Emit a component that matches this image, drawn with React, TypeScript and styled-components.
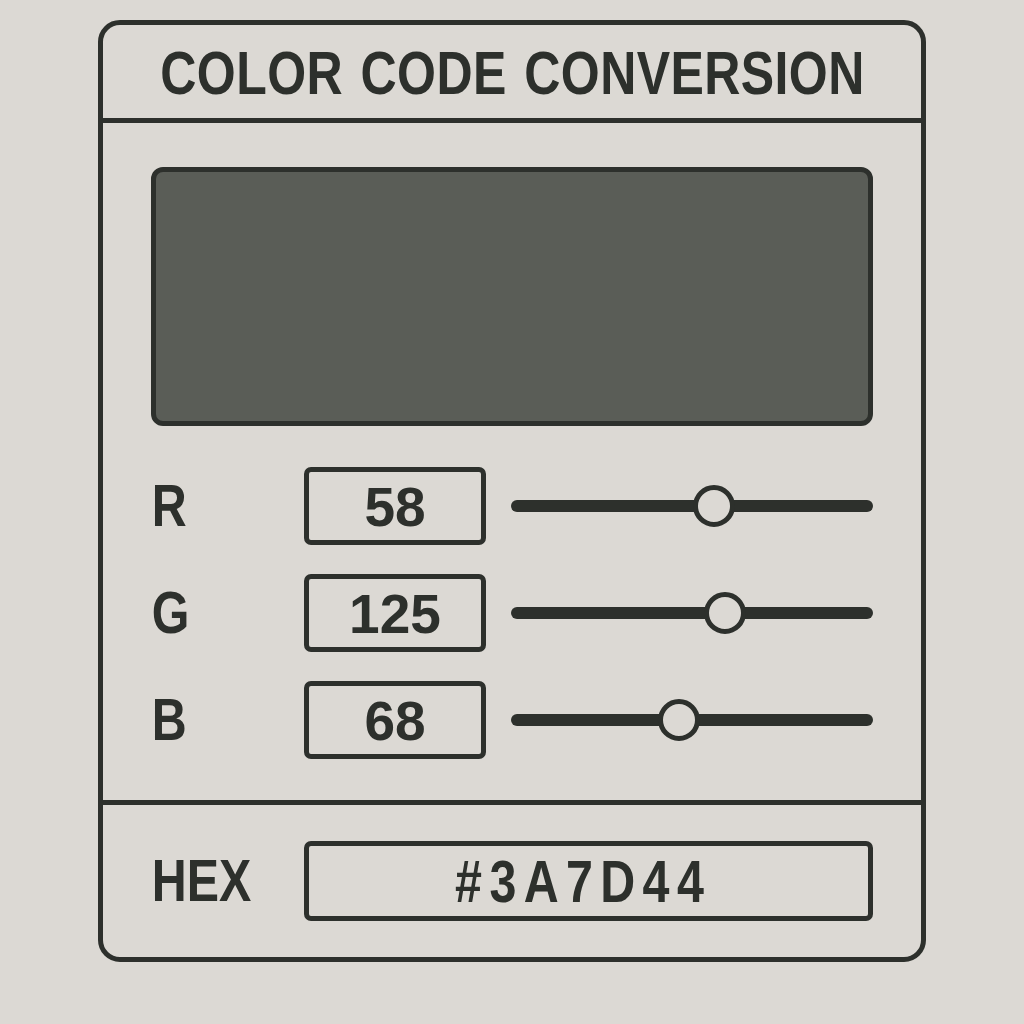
import React from "react";
import styled, { createGlobalStyle } from "styled-components";

const ink = "#2d302c";
const paper = "#dcd9d4";
const sans = `"Liberation Sans", Arial, sans-serif`;

const Global = createGlobalStyle`
  html, body { margin: 0; padding: 0; background: ${paper}; }
  body { font-family: ${sans}; color: ${ink}; }
`;

const Page = styled.div`
  width: 1024px;
  height: 1024px;
  box-sizing: border-box;
  padding: 20px 0 0 98px;
`;

const Card = styled.div`
  width: 828px;
  height: 942px;
  box-sizing: border-box;
  border: 5px solid ${ink};
  border-radius: 22px;
  display: flex;
  flex-direction: column;
`;

const Header = styled.div`
  height: 98px;
  flex: 0 0 auto;
  box-sizing: border-box;
  border-bottom: 5px solid ${ink};
  display: flex;
  align-items: center;
  justify-content: center;
  padding-top: 4px;
`;

const Narrow = styled.span<{ $origin?: string }>`
  display: inline-block;
  font-family: ${sans};
  font-weight: 700;
  white-space: nowrap;
  line-height: 1;
  transform: scaleX(0.82);
  transform-origin: ${(p) => p.$origin ?? "center"};
`;

const Title = styled(Narrow).attrs({ as: "h1" })`
  margin: 0;
  font-size: 61px;
  letter-spacing: 0.5px;
  word-spacing: 4px;
`;

const Body = styled.div`
  flex: 0 0 auto;
  height: 682px;
  box-sizing: border-box;
  border-bottom: 5px solid ${ink};
  padding: 44px 48px 0 48px;
  display: flex;
  flex-direction: column;
`;

const Swatch = styled.div<{ $color: string }>`
  height: 259px;
  box-sizing: border-box;
  border: 5px solid ${ink};
  border-radius: 12px;
  background: ${(p) => p.$color};
`;

const Rows = styled.div`
  margin-top: 41px;
  display: flex;
  flex-direction: column;
  gap: 29px;
`;

const Row = styled.div`
  display: grid;
  grid-template-columns: 153px 182px 1fr;
  align-items: center;
  height: 78px;
`;

const Label = styled(Narrow)`
  font-size: 59px;
  padding-left: 1px;
`;

const ValueBox = styled.div`
  height: 78px;
  box-sizing: border-box;
  border: 5px solid ${ink};
  border-radius: 7px;
  display: flex;
  align-items: center;
  justify-content: center;
  font-family: ${sans};
  font-weight: 700;
  font-size: 55px;
  line-height: 1;
  padding-top: 3px;
`;

const Track = styled.div`
  position: relative;
  margin-left: 25px;
  height: 12px;
  border-radius: 6px;
  background: ${ink};
`;

const Knob = styled.div`
  position: absolute;
  top: 50%;
  width: 42px;
  height: 42px;
  box-sizing: border-box;
  border-radius: 50%;
  border: 5px solid ${ink};
  background: ${paper};
  transform: translate(-50%, -50%);
`;

const Footer = styled.div`
  flex: 1;
  display: grid;
  grid-template-columns: 153px 1fr;
  align-items: center;
  padding: 0 48px 0 48px;
`;

const HexBox = styled.div`
  height: 80px;
  box-sizing: border-box;
  border: 5px solid ${ink};
  border-radius: 7px;
  display: flex;
  align-items: center;
  justify-content: center;
  padding-top: 3px;
`;

const HexValue = styled(Narrow)`
  font-size: 59px;
  letter-spacing: 9px;
  margin-right: 10px;
`;

const channels = [
  { label: "R", value: 58, pos: 0.56 },
  { label: "G", value: 125, pos: 0.592 },
  { label: "B", value: 68, pos: 0.463 },
];

export default function App() {
  return (
    <>
      <Global />
      <Page>
        <Card>
          <Header>
            <Title>COLOR CODE CONVERSION</Title>
          </Header>
          <Body>
            <Swatch $color="#5a5d57" />
            <Rows>
              {channels.map((c) => (
                <Row key={c.label}>
                  <Label $origin="left center">{c.label}</Label>
                  <ValueBox>{c.value}</ValueBox>
                  <Track>
                    <Knob style={{ left: `${c.pos * 100}%` }} />
                  </Track>
                </Row>
              ))}
            </Rows>
          </Body>
          <Footer>
            <Label $origin="left center">HEX</Label>
            <HexBox>
              <HexValue>#3A7D44</HexValue>
            </HexBox>
          </Footer>
        </Card>
      </Page>
    </>
  );
}
